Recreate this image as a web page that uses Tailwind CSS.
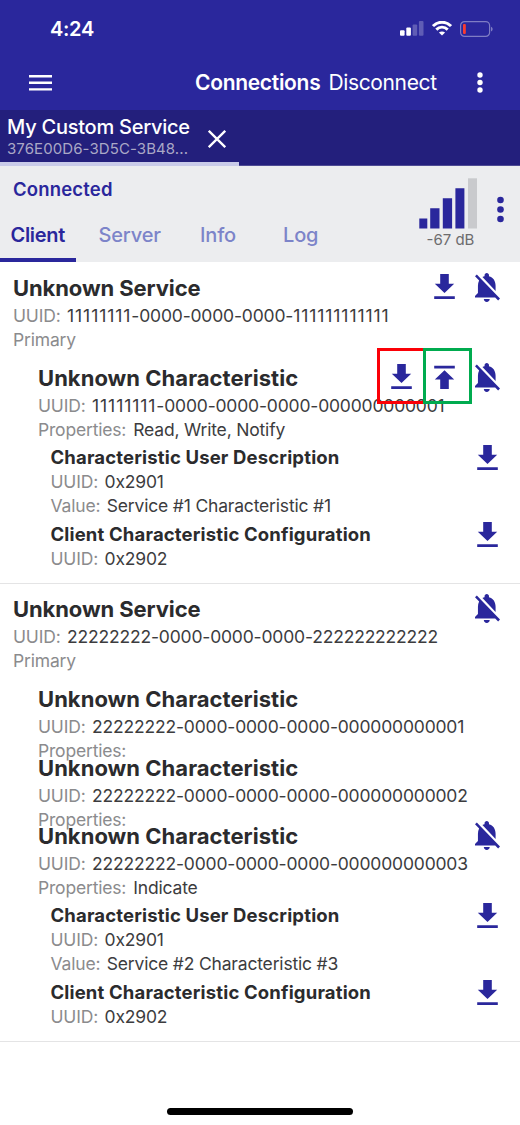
<!DOCTYPE html>
<html lang="en">
<head>
<meta charset="utf-8">
<title>Connections</title>
<script src="https://cdn.jsdelivr.net/npm/@tailwindcss/browser@4"></script>
</head>
<body class="w-[520px] h-[1125px] bg-white font-['Inter',sans-serif] text-[17.5px] text-[#3c3c3e] overflow-hidden whitespace-nowrap">
<svg class="hidden">
  <symbol id="down" viewBox="0 0 21 25"><path d="M6.2 0h8.6v9.8h5.4L10.5 19 .8 9.8h5.4zM.2 22.3h20.6v2.7H.2z"/></symbol>
  <symbol id="up" viewBox="0 0 21 25"><path d="M6.2 25h8.6v-9.400h5.4L10.5 6.200.8 15.600h5.4zM.2 1.700h20.6v2.7H.2z"/></symbol>
  <symbol id="bell" viewBox="4 2.5 17 19.5" preserveAspectRatio="none"><path d="M20 18.69L7.84 6.14 5.27 3.49 4 4.76l2.8 2.8v.01c-.52.99-.8 2.16-.8 3.42v5l-2 2v1h13.73l2 2L21 19.72l-1-1.03zM12 22c1.11 0 2-.89 2-2h-4c0 1.11.89 2 2 2zm6-7.32V11c0-3.08-1.64-5.64-4.5-6.32V4c0-.83-.67-1.5-1.5-1.5s-1.5.67-1.5 1.5v.68c-.15.03-.29.08-.42.12-.1.03-.2.07-.3.11h-.01c-.01 0-.01 0-.02.01-.23.09-.46.2-.68.31 0 0-.01 0-.01.01L18 14.68z"/></symbol>
</svg>
<div class="h-full flex flex-col">
  <header class="h-[110px] bg-[#2a279c] text-white">
    <div class="h-[57px] flex items-center pl-[50px] pr-[27px]">
      <span class="text-[20px] font-semibold tracking-[-0.3px]">4:24</span>
      <div class="ml-auto flex items-center">
        <svg class="w-[24px] h-[15px]" viewBox="0 0 24 15" fill="#fff"><rect y="9.3" width="4.6" height="5.5" rx="1"/><rect x="6.3" y="6.6" width="4.6" height="8.2" rx="1"/><g opacity=".25"><rect x="12.6" y="3.4" width="4.6" height="11.4" rx="1"/><rect x="18.9" y="0" width="4.6" height="14.8" rx="1"/></g></svg>
        <svg class="ml-[8px] w-[20px] h-[15px]" viewBox="0 0 20 15" fill="none" stroke="#fff" stroke-width="2.9"><path d="M1 5.1C6-.1 14-.1 19 5.1M4.3 8.6c3.300-3.300 8.100-3.300 11.400 0"/><path d="M10 14.600 6.900 11.500c1.800-1.500 4.400-1.500 6.200 0z" fill="#fff" stroke="none"/></svg>
        <svg class="ml-[8px] w-[33px] h-[16px]" viewBox="0 0 33 16"><rect x=".6" y=".6" width="29" height="14.800" rx="4" fill="none" stroke="#7f7dc4" stroke-width="1.200"/><rect x="3" y="3" width="2.800" height="10" rx="1" fill="#fb3b30"/><path d="M31 5.700c2.200.8 2.200 4 0 4.800z" fill="#7f7dc4"/></svg>
      </div>
    </div>
    <div class="h-[52px] flex items-center pl-[29px] pr-[37px]">
      <svg class="w-[23px] h-[16px]" viewBox="0 0 23 16" fill="#fff"><path d="M0 0h23v2.400H0zM0 6.600h23V9H0zM0 13.200h23v2.400H0z"/></svg>
      <span class="ml-[143px] text-[21px] leading-[32px] font-semibold tracking-[-0.3px]">Connections</span>
      <span class="ml-[8px] text-[21px] leading-[32px] tracking-[-0.35px]">Disconnect</span>
      <svg class="ml-auto mb-[2px] w-[6px] h-[21px]" viewBox="0 0 6 21" fill="#fff"><circle cx="3" cy="3" r="2.700"/><circle cx="3" cy="10.500" r="2.700"/><circle cx="3" cy="18" r="2.700"/></svg>
    </div>
  </header>
  <div class="h-[56px] bg-[#231f7c] border-b border-[#4e4b94] flex">
    <div class="w-[239px] h-[56px] border-b-4 border-[#c9cbe9] pl-[7px] pr-[13px] flex items-center justify-between text-white">
      <div class="pt-[2px]">
        <div class="h-[26px] leading-[26px] text-[20px] font-medium tracking-[-0.25px]">My Custom Service</div>
        <div class="h-[20px] leading-[18px] text-[15px] tracking-[0.09px] text-[#aaa8c6]">376E00D6-3D5C-3B48...</div>
      </div>
      <svg class="mt-[6px] w-[18px] h-[18px]" viewBox="0 0 18 18" stroke="#fff" stroke-width="2.300"><path d="m.8.8 16.400 16.400m0-16.400L.8 17.200"/></svg>
    </div>
  </div>
  <div class="h-[96px] bg-[#ecedef] flex text-[#2a279c]">
    <div class="flex-1 flex flex-col">
      <div class="h-[46px] leading-[47px] pl-[13px] text-[18.5px] tracking-[0.17px] font-semibold">Connected</div>
      <nav class="h-[50px] flex text-[20px] leading-[46px] tracking-[-0.15px] font-medium text-[#7c84c9]">
        <div class="w-[76px] pl-[10.5px] border-b-4 border-[#2a279c] text-[#2a279c] font-semibold tracking-[-0.3px]">Client</div>
        <div class="w-[124px] pl-[22.5px]">Server</div>
        <div class="w-[83px]">Info</div>
        <div>Log</div>
      </nav>
    </div>
    <div class="flex pr-[16px]">
      <div class="flex flex-col items-center pt-[12px]">
        <svg class="w-[58px] h-[51px]" viewBox="0 0 58 51" fill="#2a279c"><path d="M.3 40.500h8v10h-8zM11.200 30.300h9.300v20.200h-9.300zM23.800 20.300h9.300v30.200h-9.300zM36.400 10.300h9v40.200h-9z"/><path d="M49 .3h9v50.200h-9z" fill="#c9cacd"/></svg>
        <div class="ml-[5px] leading-[22px] text-[15px] text-[#6c6c6e]">-67 dB</div>
      </div>
      <svg class="mt-[30px] ml-[20px] w-[7px] h-[27px]" viewBox="0 0 7 27" fill="#2a279c"><circle cx="3.500" cy="4" r="3.300"/><circle cx="3.500" cy="13.500" r="3.300"/><circle cx="3.500" cy="23" r="3.300"/></svg>
    </div>
  </div>

  <main class="leading-[24px] tracking-[-0.18px] fill-[#2a279c]">
    <section class="h-[322px] pt-[17px] pl-[13px] pr-[20px] border-b border-[#e4e4e5]">
      <div class="h-[18px] mb-[7px] flex items-center"><h2 class="text-[22px] font-bold tracking-[-0.1px] text-[#2b2b2d] flex-1">Unknown Service</h2><svg class="w-[21px] h-[25px] mr-[20px] mb-[3px]"><use href="#down"/></svg><svg class="w-[25px] h-[29px] mb-[2px]"><use href="#bell"/></svg></div>
      <p><span class="text-[#8b8b8d] mr-[6.5px]">UUID:</span><span class="tracking-[0.92px]">11111111</span><span>-0000-0000-0000-</span><span class="tracking-[0.92px]">111111111111</span></p>
      <p class="text-[#8b8b8d]">Primary</p>
      <div class="relative pl-[25px] pt-[17px]">
        <div class="h-[18px] mb-[7px] flex items-center"><h3 class="text-[22px] font-bold tracking-[0.03px] text-[#2b2b2d] flex-1">Unknown Characteristic</h3><svg class="w-[21px] h-[25px] mr-[22px] mb-[3px]"><use href="#down"/></svg><svg class="w-[21px] h-[25px] mr-[20px] mb-[3px]"><use href="#up"/></svg><svg class="w-[25px] h-[29px] mb-[2px]"><use href="#bell"/></svg></div>
        <p><span class="text-[#8b8b8d] mr-[6.5px]">UUID:</span><span class="tracking-[0.92px]">11111111</span><span>-0000-0000-0000-000000000001</span></p>
        <p><span class="text-[#8b8b8d] mr-[7px]">Properties:</span><span>Read, Write, Notify</span></p>
        <div class="absolute left-[364px] top-[-4px] w-[49px] h-[56px] border-[3px] border-[#fb0007]"></div>
        <div class="absolute left-[410px] top-[-4px] w-[49px] h-[56px] border-[3px] border-[#00ab4f]"></div>
        <div class="pl-[12.5px] pt-[3px]">
          <div class="h-[24px] mb-px flex items-center"><h4 class="text-[18.500px] font-bold tracking-[0.16px] text-[#2b2b2d] flex-1">Characteristic User Description</h4><svg class="w-[21px] h-[25px] mr-[2px]"><use href="#down"/></svg></div>
          <p><span class="text-[#8b8b8d] mr-[6.5px]">UUID:</span><span>0x2901</span></p>
          <p><span class="text-[#8b8b8d] mr-[6.5px]">Value:</span><span>Service #1 Characteristic #1</span></p>
          <div class="mt-[4px] mb-px h-[24px] flex items-center"><h4 class="text-[18.500px] font-bold tracking-[0.16px] text-[#2b2b2d] flex-1">Client Characteristic Configuration</h4><svg class="w-[21px] h-[25px] mr-[2px]"><use href="#down"/></svg></div>
          <p><span class="text-[#8b8b8d] mr-[6.5px]">UUID:</span><span>0x2902</span></p>
        </div>
      </div>
    </section>

    <section class="h-[458px] pt-[16px] pl-[13px] pr-[20px] border-b border-[#e4e4e5]">
      <div class="h-[18px] mb-[7px] flex items-center"><h2 class="text-[22px] font-bold tracking-[-0.1px] text-[#2b2b2d] flex-1">Unknown Service</h2><svg class="w-[25px] h-[29px] mb-[2px]"><use href="#bell"/></svg></div>
      <p><span class="text-[#8b8b8d] mr-[6.5px]">UUID:</span><span>22222222-0000-0000-0000-222222222222</span></p>
      <p class="text-[#8b8b8d]">Primary</p>
      <div class="pl-[25px] pt-[17px]">
        <div class="h-[18px] mb-[7px] flex items-center"><h3 class="text-[22px] font-bold tracking-[0.03px] text-[#2b2b2d] flex-1">Unknown Characteristic</h3></div>
        <p><span class="text-[#8b8b8d] mr-[6.5px]">UUID:</span><span>22222222-0000-0000-0000-000000000001</span></p>
        <p class="text-[#8b8b8d] h-[20px]">Properties:</p>
        <div class="h-[18px] mb-[7px] flex items-center"><h3 class="text-[22px] font-bold tracking-[0.03px] text-[#2b2b2d] flex-1">Unknown Characteristic</h3></div>
        <p><span class="text-[#8b8b8d] mr-[6.5px]">UUID:</span><span>22222222-0000-0000-0000-000000000002</span></p>
        <p class="text-[#8b8b8d] h-[19px]">Properties:</p>
        <div class="h-[18px] mb-[7px] flex items-center"><h3 class="text-[22px] font-bold tracking-[0.03px] text-[#2b2b2d] flex-1">Unknown Characteristic</h3><svg class="w-[25px] h-[29px] mb-[2px]"><use href="#bell"/></svg></div>
        <p><span class="text-[#8b8b8d] mr-[6.5px]">UUID:</span><span>22222222-0000-0000-0000-000000000003</span></p>
        <p><span class="text-[#8b8b8d] mr-[7px]">Properties:</span><span>Indicate</span></p>
        <div class="pl-[12.5px] pt-[3px]">
          <div class="h-[24px] mb-px flex items-center"><h4 class="text-[18.500px] font-bold tracking-[0.16px] text-[#2b2b2d] flex-1">Characteristic User Description</h4><svg class="w-[21px] h-[25px] mr-[2px]"><use href="#down"/></svg></div>
          <p><span class="text-[#8b8b8d] mr-[6.5px]">UUID:</span><span>0x2901</span></p>
          <p><span class="text-[#8b8b8d] mr-[6.5px]">Value:</span><span>Service #2 Characteristic #3</span></p>
          <div class="mt-[4px] mb-px h-[24px] flex items-center"><h4 class="text-[18.500px] font-bold tracking-[0.16px] text-[#2b2b2d] flex-1">Client Characteristic Configuration</h4><svg class="w-[21px] h-[25px] mr-[2px]"><use href="#down"/></svg></div>
          <p><span class="text-[#8b8b8d] mr-[6.5px]">UUID:</span><span>0x2902</span></p>
        </div>
      </div>
    </section>
  </main>
  <div class="mt-[66px] mx-auto w-[186px] h-[7px] shrink-0 rounded-full bg-black"></div>
</div>
</body>
</html>
